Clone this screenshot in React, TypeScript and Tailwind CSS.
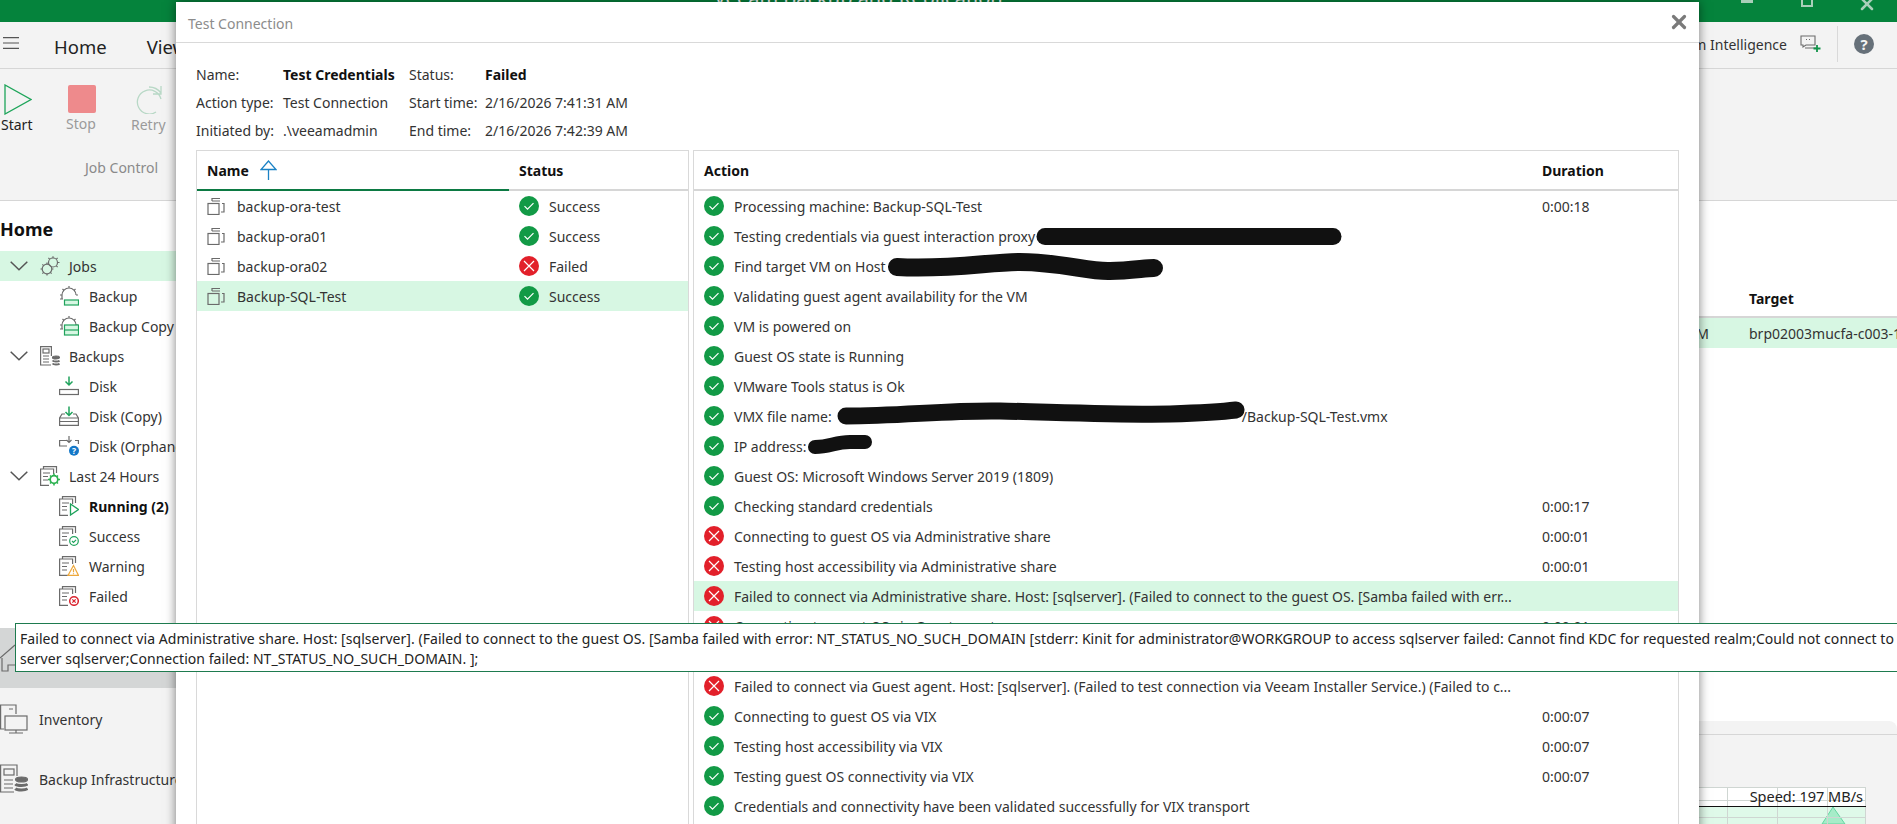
import { X } from "lucide-react";
import type { ReactNode } from "react";

const GRAY = "#6b6b6b";
const GREEN = "#1fa35c";

function Ok() {
  return (
    <svg width="20" height="20" viewBox="0 0 20 20" className="shrink-0">
      <circle cx="10" cy="10" r="10" fill="#129a46" />
      <path d="M5.5 10.2l3 3 6-6" fill="none" stroke="#fff" strokeWidth="1.2" />
    </svg>
  );
}

function Fail() {
  return (
    <svg width="20" height="20" viewBox="0 0 20 20" className="shrink-0">
      <circle cx="10" cy="10" r="10" fill="#e2202a" />
      <path d="M5 5l10 10M15 5L5 15" fill="none" stroke="#fff" strokeWidth="1.2" />
    </svg>
  );
}

function VmIcon() {
  return (
    <svg width="18" height="18" viewBox="0 0 18 18" fill="none" stroke={GRAY} strokeWidth="1.2" className="shrink-0">
      <rect x="1" y="6.5" width="11" height="11" />
      <path d="M5 4V1.5h8M13 4H5M15 6.5h2V15h-3" />
    </svg>
  );
}

function Gears() {
  return (
    <svg width="20" height="20" viewBox="0 0 20 20" fill="none" stroke={GRAY} strokeWidth="1.2">
      <circle cx="7" cy="13" r="4.8" />
      <circle cx="13" cy="6.5" r="4.5" />
      <path d="M7 6.5v1.7M7 17.8v1.7M.5 13h1.7M11.8 13h1.7M2.4 8.4l1.2 1.2M10.4 16.4l1.2 1.2M2.4 17.6l1.2-1.2M13 .3V2M19.5 6.5h-1.7M17.6 1.9l-1.2 1.2M17.6 11.1l-1.2-1.2M8.4 1.9l1.2 1.2" />
    </svg>
  );
}

function JobIcon({ copy }: { copy?: boolean }) {
  return (
    <svg width="20" height="20" viewBox="0 0 20 20" fill="none" strokeWidth="1.2">
      <path d="M3 13V9a7 7 0 0 1 14 0M1 9h2M17 9h2M10 0v2M3.5 3l1.6 1.6M16.5 3l-1.6 1.6M1 13h3" stroke={GRAY} />
      {copy ? (
        <g stroke={GREEN} fill="#d7f7e3">
          <rect x="5.5" y="9" width="14" height="10" />
          <path d="M5.5 14h14" />
        </g>
      ) : (
        <rect x="5.5" y="14" width="14" height="5" stroke={GREEN} fill="#d7f7e3" />
      )}
    </svg>
  );
}

function BackupsIcon() {
  return (
    <svg width="20" height="20" viewBox="0 0 20 20" fill="none" stroke={GRAY} strokeWidth="1.2">
      <path d="M11 19H.6V.6h10.800V10" />
      <rect x="3" y="3" width="6" height="4" />
      <path d="M3 10h6M3 13h6M3 16h6" />
      <ellipse cx="16" cy="11.500" rx="3.500" ry="1.500" fill={GRAY} />
      <path d="M12.500 14.500c1 1.300 6 1.300 7 0M12.500 17.500c1 1.300 6 1.300 7 0" strokeWidth="2" />
    </svg>
  );
}

function DiskIcon({ kind }: { kind: "disk" | "copy" | "orphan" }) {
  return (
    <svg width="20" height="20" viewBox="0 0 20 20" fill="none" strokeWidth="1.2">
      {kind === "disk" && <rect x=".6" y="13.500" width="18.800" height="5" stroke={GRAY} />}
      {kind === "disk" && <path d="M10 .5v8M6.500 5.500l3.500 3.500 3.500-3.500" stroke={GREEN} strokeWidth="1.500" />}
      {kind === "copy" && (
        <>
          <path d="M6 8H3L.6 12v7.400h18.800V12L17 8h-3M.6 12h18.800M.6 15.500h18.800" stroke={GRAY} />
          <path d="M10 .5v9M6.500 6l3.500 3.500L13.500 6" stroke={GREEN} strokeWidth="1.500" />
        </>
      )}
      {kind === "orphan" && (
        <>
          <path d="M8 4.500H.6v5.500H8M16 4.500h3.400V8M10 0v6M7.500 4l2.500 2.500L12.500 4" stroke={GRAY} />
          <circle cx="15" cy="14.800" r="5" fill="#1478c8" />
          <text x="15" y="18" textAnchor="middle" fontSize="8.500" fontWeight="700" fill="#fff">?</text>
        </>
      )}
    </svg>
  );
}

function ReportIcon({ badge }: { badge: "gear" | "play" | "ok" | "warn" | "fail" }) {
  return (
    <svg width="20" height="20" viewBox="0 0 20 20" fill="none" strokeWidth="1.2">
      <path d="M3.500 3V.6h13V7M9 19.400H.6V3h13v5" stroke={GRAY} />
      <path d="M3 7h7M3 10.500h5M3 14h5" stroke={GRAY} />
      {badge === "gear" && (
        <g stroke="#2bb14f">
          <circle cx="14" cy="13.500" r="3.800" strokeWidth="1.700" />
          <path d="M14 7.500v2M14 17.500v2M8 13.500h2M18 13.500h2M10 9.500l1.300 1.300M16.700 16.200l1.300 1.300M10 17.500l1.300-1.300M16.700 10.800L18 9.500" strokeWidth="1.500" />
        </g>
      )}
      {badge === "play" && <path d="M11.500 8v11l8-5.500z" stroke={GREEN} fill="#fff" strokeWidth="1.300" />}
      {badge === "ok" && (
        <g stroke={GREEN}>
          <circle cx="15" cy="15" r="4.300" fill="#fff" />
          <path d="M13 15l1.500 1.500 2.600-2.600" />
        </g>
      )}
      {badge === "warn" && (
        <g stroke="#eda83c">
          <path d="M14.500 9.500l5 9.900h-10.500z" fill="#fff" />
          <path d="M14.500 13v3.300M14.500 17.200v1" />
        </g>
      )}
      {badge === "fail" && (
        <g stroke="#d9232e">
          <circle cx="15" cy="15" r="4.300" fill="#fff" strokeWidth="1.500" />
          <path d="M13.300 13.300l3.400 3.400M16.700 13.300l-3.400 3.400" />
        </g>
      )}
    </svg>
  );
}

function Chevron() {
  return (
    <svg width="18" height="10" viewBox="0 0 18 10" fill="none" stroke="#555" strokeWidth="1.500">
      <path d="M.7.7L9 8.800 17.300.7" />
    </svg>
  );
}

function TreeRow({ icon, label, parent, active, bold }: { icon: ReactNode; label: string; parent?: boolean; active?: boolean; bold?: boolean }) {
  return (
    <div className={`flex h-[30px] items-center whitespace-nowrap ${parent ? "pl-[10px]" : "pl-[59px]"} ${active ? "bg-[#d7f7e3]" : ""}`}>
      {parent && (
        <span className="flex w-[30px] shrink-0">
          <Chevron />
        </span>
      )}
      <span className="flex w-[20px] shrink-0">{icon}</span>
      <span className={`${parent ? "ml-[9px]" : "ml-[10px]"} ${bold ? "font-bold text-[#111]" : ""}`}>{label}</span>
    </div>
  );
}

function Sidebar() {
  return (
    <aside className="flex w-[176px] shrink-0 flex-col overflow-hidden text-[#333]">
      <div className="flex h-[50px] items-end pb-[10px] text-[18px] leading-[24px] font-bold text-[#111]">Home</div>
      <TreeRow parent active icon={<Gears />} label="Jobs" />
      <TreeRow icon={<JobIcon />} label="Backup" />
      <TreeRow icon={<JobIcon copy />} label="Backup Copy" />
      <TreeRow parent icon={<BackupsIcon />} label="Backups" />
      <TreeRow icon={<DiskIcon kind="disk" />} label="Disk" />
      <TreeRow icon={<DiskIcon kind="copy" />} label="Disk (Copy)" />
      <TreeRow icon={<DiskIcon kind="orphan" />} label="Disk (Orphaned)" />
      <TreeRow parent icon={<ReportIcon badge="gear" />} label="Last 24 Hours" />
      <TreeRow bold icon={<ReportIcon badge="play" />} label="Running (2)" />
      <TreeRow icon={<ReportIcon badge="ok" />} label="Success" />
      <TreeRow icon={<ReportIcon badge="warn" />} label="Warning" />
      <TreeRow icon={<ReportIcon badge="fail" />} label="Failed" />

      <nav className="mt-[17px] flex flex-1 flex-col bg-[#f3f3f3]">
        <div className="mb-[1px] flex h-[60px] items-center gap-[24px] bg-[#d4d6d6]">
          <svg width="16" height="30" viewBox="14 0 16 30" fill="none" stroke={GRAY} strokeWidth="1.200" className="shrink-0">
            <path d="M14 15L29 2M16 15v13h6v-6h7" />
          </svg>
          <span>Home</span>
        </div>
        <div className="flex h-[60px] items-center gap-[11px] whitespace-nowrap">
          <svg width="28" height="30" viewBox="0 0 28 30" fill="none" stroke={GRAY} strokeWidth="1.200" className="shrink-0">
            <path d="M4 25H.6V1H16v9M9 5h4" />
            <rect x="5" y="12" width="22" height="14" />
            <path d="M12 29h8M9 29h14M16 26v3" />
          </svg>
          <span>Inventory</span>
        </div>
        <div className="flex h-[60px] items-center gap-[11px] whitespace-nowrap">
          <svg width="28" height="30" viewBox="0 0 28 30" fill="none" stroke={GRAY} strokeWidth="1.200" className="shrink-0">
            <path d="M14 28H.6V1H17v11" />
            <rect x="4" y="5" width="10" height="6" />
            <path d="M4 16h9M4 20h9M4 24h9" />
            <ellipse cx="21.500" cy="15.500" rx="6" ry="2.500" fill={GRAY} />
            <path d="M15.500 20c1.500 2 10.500 2 12 0M15.500 24.500c1.500 2 10.500 2 12 0" strokeWidth="3" />
          </svg>
          <span>Backup Infrastructure</span>
        </div>
      </nav>
    </aside>
  );
}

function Ribbon() {
  return (
    <>
      <div className="flex h-[47px] shrink-0 items-center border-b border-[#d6d6d6] bg-[#f3f3f3] pr-[23px] pb-[2px]">
        <svg width="16" height="12" viewBox="0 0 16 12" fill="none" stroke="#555" strokeWidth="1.200" className="mb-[2px] ml-[3px] shrink-0">
          <path d="M0 .6h16M0 6h16M0 11.400h16" />
        </svg>
        <span className="mt-[5px] ml-[35px] text-[18.500px] text-[#222]">Home</span>
        <span className="mt-[5px] ml-[40px] text-[18.500px] text-[#222]">View</span>
        <span className="ml-auto text-[#333]">Veeam Intelligence</span>
        <svg width="22" height="18" viewBox="0 0 22 18" fill="none" stroke={GRAY} strokeWidth="1.100" className="ml-[13px]">
          <path d="M2 1h13v9H6l-3 2v-2H1V1zM5 13h11M6 4.500h1M9 4.500h1" />
          <path d="M17 10v7M13.500 13.500h7" stroke="#12934a" strokeWidth="1.800" />
        </svg>
        <span className="ml-[15px] h-[36px] w-px bg-[#d9d9d9]" />
        <span className="ml-[16px] flex h-[20px] w-[20px] items-center justify-center rounded-full bg-[#667079] text-[15px] font-bold text-[#f3f3f3]">?</span>
      </div>
      <div className="flex h-[132px] shrink-0 flex-col border-b border-[#d6d6d6] bg-[#f3f3f3]">
        <div className="flex pt-[15px]">
          <div className="flex w-[66px] flex-col text-[#222]">
            <svg width="28" height="31" viewBox="0 0 28 31" fill="none" stroke="#1ea55a" strokeWidth="1.300" className="ml-[4px]">
              <path d="M1 1v29l26-14.500z" />
            </svg>
            <span className="mt-[-1px] ml-[1px] leading-[22px]">Start</span>
          </div>
          <div className="flex w-[65px] flex-col text-[#9a9a9a]">
            <span className="mt-[1px] ml-[2px] h-[28px] w-[28px] rounded-[2px] bg-[#ee8a8c]" />
            <span className="leading-[22px]">Stop</span>
          </div>
          <div className="flex flex-col text-[#9a9a9a]">
            <svg width="28" height="29" viewBox="0 0 28 29" fill="none" stroke="#b8d8c6" strokeWidth="1.300" className="mt-[1px] ml-[4px]">
              <path d="M26 14a12 12 0 1 0-5 13M14 2c5 0 9 2 12 6M26 1v8h-8" />
            </svg>
            <span className="leading-[22px]">Retry</span>
          </div>
        </div>
        <span className="mt-[21px] ml-[85px] leading-[22px] text-[#8a8a8a]">Job Control</span>
      </div>
    </>
  );
}

function SpeedChart() {
  return (
    <div className="relative h-[37px] w-[168px] self-end">
      <svg width="168" height="37" viewBox="0 0 168 37" className="block">
        <rect x="0" y="0" width="167" height="19" fill="#fff" />
        <rect x="0" y="19" width="167" height="18" fill="#dff9e9" />
        <path d="M134 20L123 37H146z" fill="#a6ecc8" stroke="#63d6a1" />
        <path d="M28.500 0V37M78.500 0V37M128.500 0V37M0 13.500H167M0 30.500H167M0 .5H167M166.500 0V37" stroke="#cfd6d2" fill="none" />
        <path d="M0 19.500H167" stroke="#111" fill="none" />
      </svg>
      <span className="absolute top-[-2px] right-[4px] text-[14.500px] leading-[22px] whitespace-nowrap text-[#222]">Speed: 197 MB/s</span>
    </div>
  );
}

function MainArea() {
  return (
    <main className="flex min-w-0 flex-1 flex-col">
      <div className="mt-[79px] flex h-[38px] items-center justify-end border-b-2 border-[#d6d6d6] font-bold text-[#111]">
        <span className="w-[148px]">Target</span>
      </div>
      <div className="flex h-[30px] items-center justify-end bg-[#d7f7e3] text-[#333]">
        <span className="pr-[40px]">VM</span>
        <span className="w-[148px] overflow-hidden whitespace-nowrap">brp02003mucfa-c003-1</span>
      </div>
      <div className="mt-auto flex h-[103px] flex-col rounded-tr-[8px] bg-[#f3f3f3] pr-[30px]">
        <div className="mr-[-30px] h-[14px] border-b border-[#d6d6d6]" />
        <div className="flex flex-1 items-end justify-end">
          <SpeedChart />
        </div>
      </div>
    </main>
  );
}

const jobs = [
  { name: "backup-ora-test", ok: true },
  { name: "backup-ora01", ok: true },
  { name: "backup-ora02", ok: false },
  { name: "Backup-SQL-Test", ok: true, selected: true },
];

const actions = [
  { text: "Processing machine: Backup-SQL-Test", ok: true, time: "0:00:18" },
  { text: "Testing credentials via guest interaction proxy", ok: true },
  { text: "Find target VM on Host", ok: true },
  { text: "Validating guest agent availability for the VM", ok: true },
  { text: "VM is powered on", ok: true },
  { text: "Guest OS state is Running", ok: true },
  { text: "VMware Tools status is Ok", ok: true },
  { text: "VMX file name:", tail: "/Backup-SQL-Test.vmx", ok: true },
  { text: "IP address:", ok: true },
  { text: "Guest OS: Microsoft Windows Server 2019 (1809)", ok: true },
  { text: "Checking standard credentials", ok: true, time: "0:00:17" },
  { text: "Connecting to guest OS via Administrative share", ok: false, time: "0:00:01" },
  { text: "Testing host accessibility via Administrative share", ok: false, time: "0:00:01" },
  { text: "Failed to connect via Administrative share. Host: [sqlserver]. (Failed to connect to the guest OS. [Samba failed with err...", ok: false, selected: true },
  { text: "Connecting to guest OS via Guest agent", ok: false, time: "0:00:01" },
  { text: "", ok: false, blank: true },
  { text: "Failed to connect via Guest agent. Host: [sqlserver]. (Failed to test connection via Veeam Installer Service.) (Failed to c...", ok: false },
  { text: "Connecting to guest OS via VIX", ok: true, time: "0:00:07" },
  { text: "Testing host accessibility via VIX", ok: true, time: "0:00:07" },
  { text: "Testing guest OS connectivity via VIX", ok: true, time: "0:00:07" },
  { text: "Credentials and connectivity have been validated successfully for VIX transport", ok: true },
];

function Dialog() {
  return (
    <section className="absolute top-[2px] left-[176px] flex h-[840px] w-[1523px] flex-col bg-white text-[#333] shadow-[0_0_10px_rgba(0,0,0,0.5)]">
      <header className="flex h-[41px] shrink-0 items-center justify-between border-b border-[#d9d9d9] pr-[9px] pl-[12px]">
        <span className="mt-[2px] text-[#8c8c8c]">Test Connection</span>
        <X size={22} strokeWidth={3.5} className="text-[#7a7a7a]" />
      </header>

      <div className="grid shrink-0 grid-cols-[87px_126px_76px_1fr] px-[20px] pt-[18px] pb-[5px] leading-[28px] whitespace-nowrap">
        <span>Name:</span>
        <span className="font-bold text-[#111]">Test Credentials</span>
        <span>Status:</span>
        <span className="font-bold text-[#111]">Failed</span>
        <span>Action type:</span>
        <span>Test Connection</span>
        <span>Start time:</span>
        <span>2/16/2026 7:41:31 AM</span>
        <span>Initiated by:</span>
        <span>.\veeamadmin</span>
        <span>End time:</span>
        <span>2/16/2026 7:42:39 AM</span>
      </div>

      <div className="flex min-h-0 flex-1 pr-[20px] pl-[20px]">
        <div className="w-[493px] shrink-0 border-x border-t border-[#d9d9d9]">
          <div className="flex h-[40px] font-bold text-[#111]">
            <div className="flex w-[312px] items-center gap-[11px] border-b-2 border-[#0c7a43] pl-[10px]">
              <span>Name</span>
              <svg width="17" height="20" viewBox="0 0 17 20" fill="none" stroke="#1b82c5" strokeWidth="1.300">
                <path d="M8.500 1L1 9.500h15zM8.500 9.500V20" />
              </svg>
            </div>
            <div className="flex flex-1 items-center border-b-2 border-[#d6d6d6] pl-[10px]">Status</div>
          </div>
          {jobs.map((job) => (
            <div key={job.name} className={`flex h-[30px] items-center ${job.selected ? "bg-[#d7f7e3]" : ""}`}>
              <div className="flex w-[312px] items-center gap-[12px] pl-[10px]">
                <VmIcon />
                <span>{job.name}</span>
              </div>
              <div className="flex items-center gap-[10px] pl-[10px]">
                {job.ok ? <Ok /> : <Fail />}
                <span>{job.ok ? "Success" : "Failed"}</span>
              </div>
            </div>
          ))}
        </div>

        <div className="relative ml-[4px] flex-1 overflow-hidden border-x border-t border-[#d9d9d9]">
          <div className="flex h-[40px] items-center border-b-2 border-[#d6d6d6] font-bold text-[#111]">
            <span className="w-[848px] pl-[10px]">Action</span>
            <span>Duration</span>
          </div>
          {actions.map((row, i) => (
            <div key={i} className={`flex h-[30px] items-center whitespace-nowrap ${row.selected ? "bg-[#d7f7e3]" : ""}`}>
              <div className="flex w-[848px] items-center gap-[10px] pl-[10px]">
                {!row.blank && (row.ok ? <Ok /> : <Fail />)}
                <span>{row.text}</span>
                {row.tail && <span className="ml-[400px]">{row.tail}</span>}
              </div>
              {row.time && <span>{row.time}</span>}
            </div>
          ))}
          {/* scribbled-out hostnames on top of the rows */}
          <svg width="985" height="633" viewBox="693 191 985 633" fill="none" stroke="#111" strokeLinecap="round" className="absolute top-[40px] left-[-1px]">
            <path d="M1045 236.500H1333" strokeWidth="17" />
            <path d="M897 267C950 270 990 262 1020 262C1060 262 1090 272 1110 271C1130 271 1145 268 1154 268" strokeWidth="18" />
            <path d="M846 416C900 416 950 410 1000 411C1050 412 1120 415 1170 414C1200 413 1220 412 1236 410" strokeWidth="17" />
            <path d="M815 447C830 447 835 442 850 442H865" strokeWidth="14" />
          </svg>
        </div>
      </div>
    </section>
  );
}

export default function App() {
  return (
    <div className="relative flex h-screen w-full flex-col overflow-hidden bg-white font-['Noto_Sans',sans-serif] text-[14px]">
      <div className="flex h-[22px] shrink-0 overflow-hidden bg-[#05833c] text-white">
        <span className="mt-[-10px] ml-[714px] text-[20px] leading-[16px] whitespace-nowrap">Veeam Backup and Replication</span>
        <span className="mt-[-9px] ml-auto h-[12px] w-[12px] bg-[#a9cfb9]" />
        <span className="mt-[-5px] ml-[48px] h-[12px] w-[12px] border-2 border-[#a9cfb9]" />
        <X size={20} strokeWidth={3} className="mt-[-6px] mr-[20px] ml-[44px] text-[#a9cfb9]" />
      </div>
      <Ribbon />
      <div className="flex min-h-0 flex-1">
        <Sidebar />
        <MainArea />
      </div>

      <Dialog />

      <div className="absolute top-[623px] left-[15px] h-[49px] w-[1900px] border border-[#1e7b4f] bg-white px-[4px] pt-[5px] leading-[20px] tracking-[0.05px] whitespace-nowrap text-[#222]">
        <div>Failed to connect via Administrative share. Host: [sqlserver]. (Failed to connect to the guest OS. [Samba failed with error: NT_STATUS_NO_SUCH_DOMAIN [stderr: Kinit for administrator@WORKGROUP to access sqlserver failed: Cannot find KDC for requested realm;Could not connect to</div>
        <div>server sqlserver;Connection failed: NT_STATUS_NO_SUCH_DOMAIN. ];</div>
      </div>
    </div>
  );
}
